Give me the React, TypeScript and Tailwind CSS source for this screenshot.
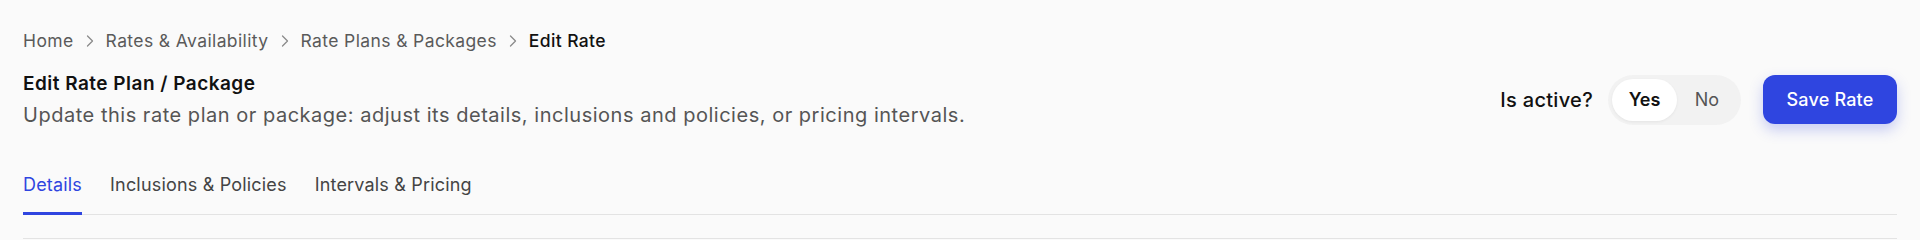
import { ChevronRight } from "lucide-react";

const crumbs = ["Home", "Rates & Availability", "Rate Plans & Packages"];
const tabs = ["Details", "Inclusions & Policies", "Intervals & Pricing"];

export default function App() {
    return (
        <div
            className="min-h-[240px] bg-[#fafafa] px-[23px] pt-[29px]"
            style={{ fontFamily: "Inter, 'Noto Sans', sans-serif" }}
        >
            <nav className="flex items-center text-[17.5px] leading-6 tracking-[0.022em] text-[#5a5a5a]">
                {crumbs.map((c) => (
                    <span key={c} className="flex items-center">
                        <span>{c}</span>
                        <ChevronRight className="mx-[6px] h-[20px] w-[20px] text-[#8a8a8a]" strokeWidth={1.5} />
                    </span>
                ))}
                <span className="font-medium text-[#111]">Edit Rate</span>
            </nav>

            <div className="mt-[17px] flex items-center justify-between">
                <div>
                    <h1 className="text-[19px] font-semibold leading-7 tracking-[0.025em] text-[#111]">Edit Rate Plan / Package</h1>
                    <p className="mt-[3px] text-[20px] leading-7 tracking-[0.026em] text-[#555]">
                        Update this rate plan or package: adjust its details, inclusions and policies, or pricing intervals.
                    </p>
                </div>
                <div className="flex items-center">
                    <span className="mr-[15px] text-[20px] font-medium tracking-[0.015em] text-[#111]">Is active?</span>
                    <div className="flex h-[50px] items-center rounded-full bg-[#f2f2f2] p-[4px]">
                        <button className="h-[42px] w-[65px] rounded-full bg-white text-[18px] font-semibold text-[#111] shadow-[0_1px_3px_rgba(0,0,0,0.06)]">
                            Yes
                        </button>
                        <button className="h-[42px] w-[60px] rounded-full text-[18px] text-[#555]">No</button>
                    </div>
                    <button className="ml-[22px] h-[49px] w-[134px] rounded-[12px] bg-[#2f45e0] text-[18px] font-medium tracking-[0.01em] text-white shadow-[0_6px_14px_rgba(47,69,224,0.25)]">
                        Save Rate
                    </button>
                </div>
            </div>

            <div className="mt-[44px] flex gap-[28px] border-b border-[#e3e3e3]">
                {tabs.map((t, i) => (
                    <button
                        key={t}
                        className={
                            i === 0
                                ? "-mb-px border-b-[3px] border-[#2f45e0] pb-[15px] text-[18px] leading-6 tracking-[0.01em] text-[#2f45e0]"
                                : "-mb-px border-b-[3px] border-transparent pb-[15px] text-[18px] leading-6 tracking-[0.01em] text-[#444]"
                        }
                    >
                        {t}
                    </button>
                ))}
            </div>
            <div className="mt-[23px] border-t border-[#e3e3e3]" />
        </div>
    );
}
